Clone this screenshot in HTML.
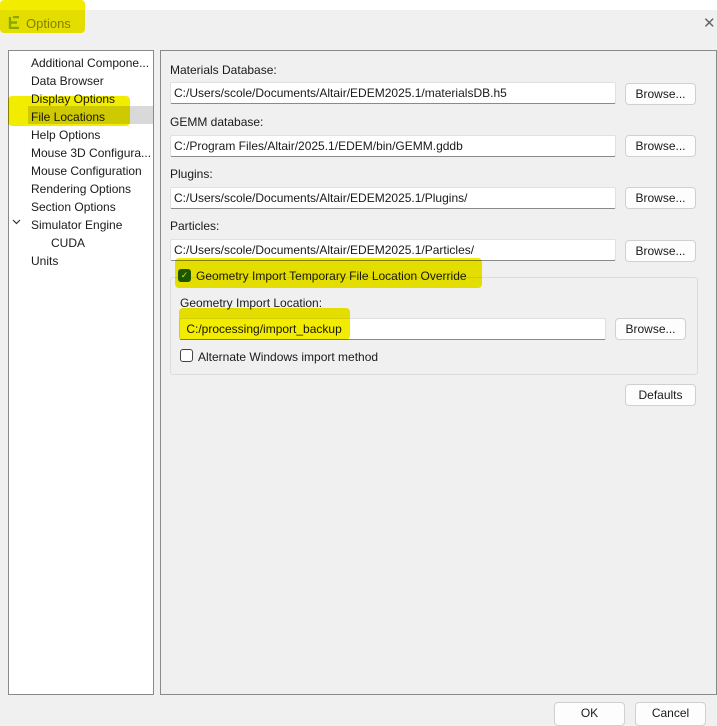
<!DOCTYPE html>
<html><head><style>
*{box-sizing:border-box;margin:0;padding:0}
body{width:717px;height:722px;background:#f0f0f0;font-family:"Liberation Sans",sans-serif;font-size:12px;color:#1a1a1a;position:relative;overflow:hidden}
.a{position:absolute;white-space:nowrap}
.hl{position:absolute;background:#f2ec00;mix-blend-mode:multiply;border-radius:4px;z-index:5}
.inp{position:absolute;background:#fff;border:1px solid #e0e0e0;border-bottom:1px solid #8a8a8a;height:22px;padding:3px 3px;border-radius:2px}
.btn{position:absolute;background:#fdfdfd;border:1px solid #d0d0d0;border-radius:4px;height:22px;text-align:center;line-height:20px}
</style></head><body>
<div class="a" style="left:0;top:0;width:717px;height:10px;background:#fff"></div>
<svg class="a" style="left:8px;top:16px" width="12" height="13" viewBox="0 0 12 13"><path d="M2 1v11h9M2 6.5h7M5 1h6" stroke="#8fb83a" stroke-width="2.4" fill="none"/></svg>
<div class="a" style="left:26px;top:16px;color:#8a8a40;font-size:13px">Options</div>
<div class="hl" style="left:0;top:0;width:85px;height:33px"></div>
<div class="a" style="left:703px;top:14px;color:#666;font-size:15px">✕</div>

<div class="a" style="left:8px;top:50px;width:146px;height:645px;background:#fff;border:1px solid #8a8a8a"></div>
<div class="a" style="left:28px;top:106px;width:125px;height:18px;background:#d9d9d9"></div>
<div class="a" style="left:31px;top:54px;line-height:18px">Additional Compone...<br>Data Browser<br>Display Options<br>File Locations<br>Help Options<br>Mouse 3D Configura...<br>Mouse Configuration<br>Rendering Options<br>Section Options<br>Simulator Engine<br>&nbsp;&nbsp;&nbsp;&nbsp;&nbsp;&nbsp;CUDA<br>Units</div>
<svg class="a" style="left:12px;top:219px" width="9" height="6"><path d="M1 1l3.5 3.5L8 1" stroke="#333" stroke-width="1.2" fill="none"/></svg>
<div class="hl" style="left:8px;top:96px;width:122px;height:30px"></div>

<div class="a" style="left:160px;top:50px;width:557px;height:645px;border:1px solid #8a8a8a"></div>

<div class="a" style="left:170px;top:63px">Materials Database:</div>
<div class="inp" style="left:170px;top:82px;width:446px">C:/Users/scole/Documents/Altair/EDEM2025.1/materialsDB.h5</div>
<div class="btn" style="left:625px;top:83px;width:71px">Browse...</div>
<div class="a" style="left:170px;top:115px">GEMM database:</div>
<div class="inp" style="left:170px;top:135px;width:446px">C:/Program Files/Altair/2025.1/EDEM/bin/GEMM.gddb</div>
<div class="btn" style="left:625px;top:135px;width:71px">Browse...</div>
<div class="a" style="left:170px;top:167px">Plugins:</div>
<div class="inp" style="left:170px;top:187px;width:446px">C:/Users/scole/Documents/Altair/EDEM2025.1/Plugins/</div>
<div class="btn" style="left:625px;top:187px;width:71px">Browse...</div>
<div class="a" style="left:170px;top:219px">Particles:</div>
<div class="inp" style="left:170px;top:239px;width:446px">C:/Users/scole/Documents/Altair/EDEM2025.1/Particles/</div>
<div class="btn" style="left:625px;top:240px;width:71px">Browse...</div>

<div class="a" style="left:170px;top:277px;width:528px;height:98px;border:1px solid #dcdcdc;border-radius:3px"></div>
<div class="a" style="left:178px;top:269px;width:13px;height:13px;background:#1f5c1f;border-radius:3px;color:#cfe;font-size:9px;text-align:center;line-height:13px">✓</div>
<div class="a" style="left:196px;top:269px">Geometry Import Temporary File Location Override</div>
<div class="hl" style="left:175px;top:258px;width:307px;height:30px"></div>
<div class="a" style="left:180px;top:296px">Geometry Import Location:</div>
<div class="inp" style="left:179px;top:318px;width:427px">&nbsp;C:/processing/import_backup</div>
<div class="hl" style="left:179px;top:308px;width:171px;height:32px"></div>
<div class="btn" style="left:615px;top:318px;width:71px">Browse...</div>
<div class="a" style="left:180px;top:349px;width:13px;height:13px;border:1px solid #444;border-radius:3px;background:#fff"></div>
<div class="a" style="left:198px;top:350px">Alternate Windows import method</div>
<div class="btn" style="left:625px;top:384px;width:71px">Defaults</div>

<div class="btn" style="left:554px;top:702px;width:71px;height:24px">OK</div>
<div class="btn" style="left:635px;top:702px;width:71px;height:24px">Cancel</div>
</body></html>
